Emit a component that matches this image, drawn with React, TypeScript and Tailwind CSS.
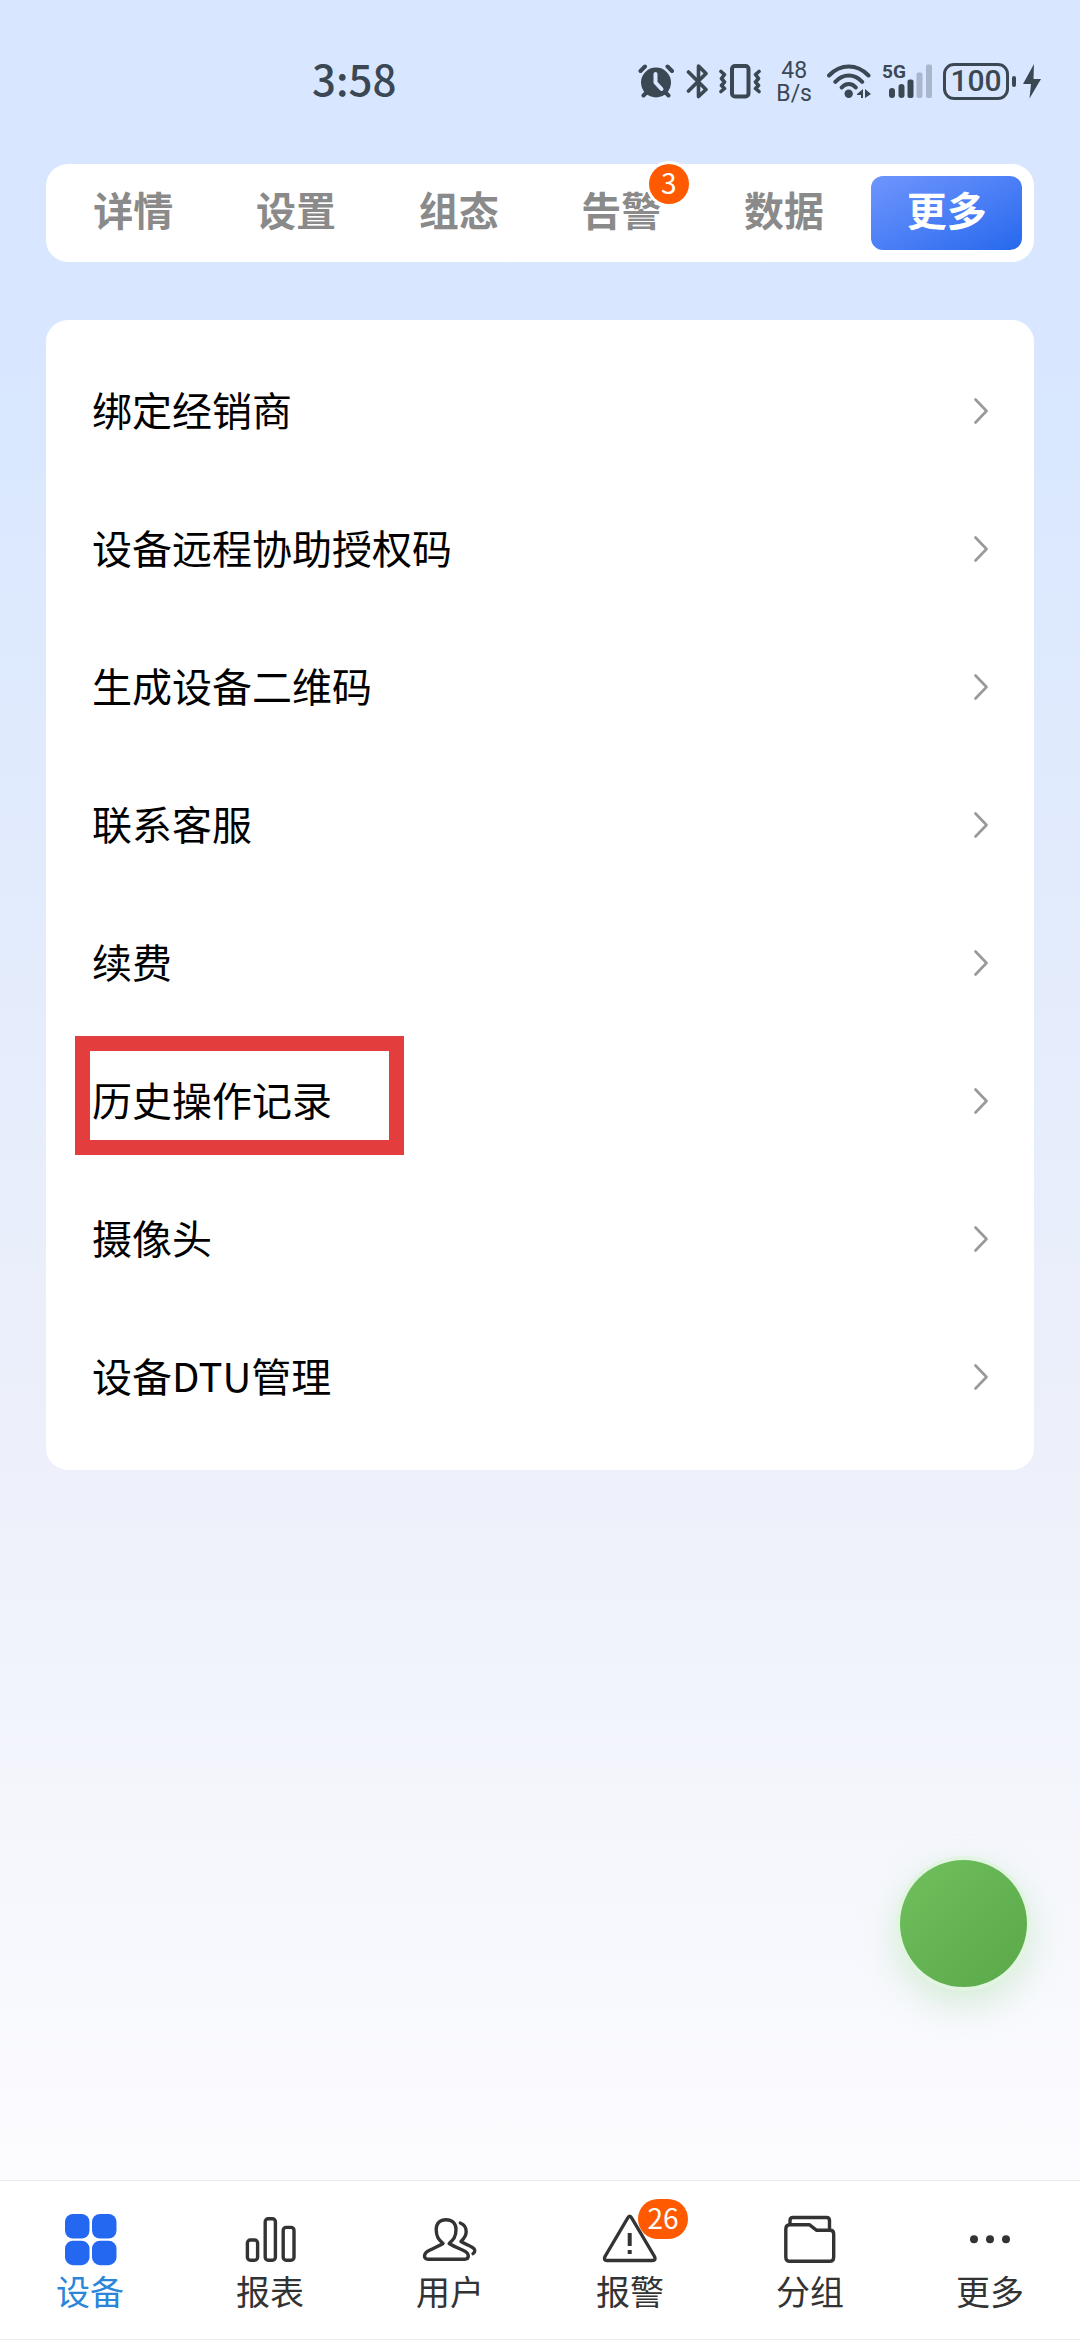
import type { ReactNode } from "react";

const TABS = [
  { label: "详情" },
  { label: "设置" },
  { label: "组态" },
  { label: "告警", badge: 3 },
  { label: "数据" },
  { label: "更多", active: true },
];

const MENU = [
  { label: "绑定经销商" },
  { label: "设备远程协助授权码" },
  { label: "生成设备二维码" },
  { label: "联系客服" },
  { label: "续费" },
  { label: "历史操作记录", highlighted: true },
  { label: "摄像头" },
  { label: "设备DTU管理" },
];

function NavIcon({ children }: { children: ReactNode }) {
  return (
    <svg
      viewBox="0 0 56 56"
      className="size-14"
      fill="none"
      stroke="#333333"
      strokeWidth="3.4"
      strokeLinecap="round"
      strokeLinejoin="round"
      aria-hidden="true"
    >
      {children}
    </svg>
  );
}

const NAV = [
  {
    label: "设备",
    active: true,
    icon: (
      <g fill="#2468f2" stroke="none">
        <rect x="3" y="3" width="24.5" height="24.5" rx="8" />
        <rect x="30" y="3" width="24.5" height="24.5" rx="8" />
        <rect x="3" y="29.7" width="24.5" height="24.5" rx="8" />
        <rect x="30" y="29.7" width="24.5" height="24.5" rx="8" />
      </g>
    ),
  },
  {
    label: "报表",
    icon: (
      <>
        <rect x="5.4" y="29" width="10.2" height="20.3" rx="3" />
        <rect x="23.2" y="7.7" width="10.2" height="41.6" rx="3" />
        <rect x="41.2" y="16.4" width="10.8" height="32.9" rx="3" />
      </>
    ),
  },
  {
    label: "用户",
    icon: (
      <>
        <path d="M21 32.5C16.6 28.6 14.2 25.6 14.2 18.5C14.2 12.3 18 8.7 24 8.7S34 12.3 34 18.5C34 25.6 31.6 28.6 27.2 32.5C32 35.5 36.5 37.2 41 39.2C45 41 46.3 42.5 46.3 45C46.3 47.4 44.8 48.2 42.5 48.2H6C3.6 48.2 2.5 47 2.5 45C2.5 42.5 4 41 7.5 39.2C12 37 17 35 21 32.5Z" />
        <path d="M38.3 12C42.3 13.5 44.3 17 44.2 20.8C44.1 25 42.2 27.5 39 30.5C42.5 32.8 47 34.5 50.5 36.5C53.5 38.3 53.5 41 51 42.6" />
      </>
    ),
  },
  {
    label: "报警",
    badge: 26,
    icon: (
      <>
        <path d="M25.7 7Q27.7 3.5 29.7 7L52.5 45.5Q54.3 49.5 50.5 49.5H5Q1.2 49.5 3 45.5Z" />
        <path d="M27.7 22V35" strokeLinecap="butt" strokeWidth="4" />
        <path d="M27.7 39V43" strokeLinecap="butt" strokeWidth="4" />
      </>
    ),
  },
  {
    label: "分组",
    icon: (
      <>
        <path d="M8 13V9.5Q8 6.5 11 6.5H44.5Q47.5 6.5 47.5 9.5V19" />
        <path d="M8 13.7H27.3L34.7 19.3H48Q51.7 19.3 51.7 23V46Q51.7 50.3 47.5 50.3H8Q3.8 50.3 3.8 46V18Q3.8 13.7 8 13.7Z" />
      </>
    ),
  },
  {
    label: "更多",
    icon: (
      <g fill="#333333" stroke="none">
        <circle cx="12" cy="28.3" r="4" />
        <circle cx="28" cy="28.3" r="4" />
        <circle cx="44" cy="28.3" r="4" />
      </g>
    ),
  },
];

function StatusBar() {
  return (
    <header className="flex h-40 items-center pt-0.5 pr-[39px] pl-[312px] font-['Roboto',sans-serif] text-[#3b4753]">
      <time className="pb-1.5 font-['Noto_Sans_CJK_SC',sans-serif] text-[42px] leading-none font-medium">
        3:58
      </time>

      <div className="ml-auto flex items-center gap-[11px]">
        {/* alarm */}
        <svg width="37" height="35" viewBox="0 0 37 35" fill="none" stroke="currentColor" strokeWidth="4" strokeLinecap="round">
          <circle cx="18" cy="18.5" r="15" fill="currentColor" stroke="none" />
          <path d="M2.5 7L7 2.5M29.5 2.5L34 7M5.5 31.5L9 28M30.5 31.5L27 28" />
          <path d="M17.5 10V18.5L23.5 25" stroke="#d8e7ff" />
        </svg>
        {/* bluetooth */}
        <svg width="22" height="35" viewBox="0 0 22 35" fill="none" stroke="currentColor" strokeWidth="3.6" strokeLinecap="round" strokeLinejoin="round">
          <path d="M2.5 8L20 25.5L12.5 32.5V2L20 9.5L2.5 27" />
        </svg>
        {/* vibrate */}
        <svg width="42" height="35" viewBox="0 0 42 35" fill="none" stroke="currentColor" strokeWidth="4" strokeLinecap="round" strokeLinejoin="round">
          <rect x="13" y="2" width="16.5" height="30.5" rx="3" />
          <path d="M2 7.5L5.5 10.5L2.5 14.5L5.5 18L2.5 21.5L5.5 24.5L2 27.5M40 7.5L36.5 10.5L39.5 14.5L36.5 18L39.5 21.5L36.5 24.5L40 27.5" strokeWidth="3.6" />
        </svg>
        <p className="mx-1 pt-0.5 text-center text-[23px] leading-[23px]">
          48
          <br />
          B/s
        </p>
        {/* wifi */}
        <svg width="44" height="35" viewBox="0 0 44 35" fill="none" stroke="currentColor" strokeWidth="4" strokeLinecap="round">
          <path d="M2 11.5C13.5 -0.5 30 -0.5 41.5 11.5M8.3 17.8C16 9.5 27.5 9.5 35.2 17.8M14.7 23.5C18.5 18.8 25 18.8 28.8 23.5" />
          <circle cx="21.7" cy="29.7" r="4.2" fill="currentColor" stroke="none" />
          <path d="M30 30L36 25V34H34V31H30ZM38 25L44 30L38 34Z" fill="currentColor" stroke="none" />
        </svg>
        {/* signal */}
        <div className="relative">
          <svg width="50" height="35" viewBox="0 0 50 35" fill="currentColor">
            <rect x="7" y="24" width="6" height="10" rx="3" />
            <rect x="16.5" y="20" width="6" height="14" rx="3" />
            <rect x="25.5" y="15.5" width="6" height="18.5" rx="2" />
            <rect x="34.5" y="8.5" width="6" height="25.5" rx="2" opacity="0.3" />
            <rect x="44" y="0.5" width="6" height="33.5" rx="2" opacity="0.3" />
          </svg>
          <span className="absolute top-0 left-0 text-[19px] leading-4 font-bold">5G</span>
        </div>
        <div className="flex items-center gap-[7px]">
          <div className="flex items-center gap-[3px]">
            <span className="flex h-[37px] w-[66px] items-center justify-center rounded-[11px] border-3 border-current text-[30px] leading-none font-medium">
              100
            </span>
            <span className="h-[11px] w-1 rounded-sm bg-current" />
          </div>
          <svg width="18" height="35" viewBox="0 0 18 35" fill="currentColor">
            <path d="M11 0L0 20H8L6.5 34.5L18 15H10.5Z" />
          </svg>
        </div>
      </div>
    </header>
  );
}

export default function App() {
  return (
    <div
      lang="zh-CN"
      className="flex min-h-screen flex-col bg-linear-to-b from-[#d8e7ff] from-15% via-[#edf0fa] via-62% to-[#fcfcff] to-93% font-['Noto_Sans_CJK_SC',sans-serif]"
    >
      <StatusBar />

      <main className="flex-1 px-[46px] pt-1">
        <div className="grid grid-cols-6 gap-3 rounded-[22px] bg-white p-3">
          {TABS.map((tab) => (
            <button
              key={tab.label}
              className={`relative h-[74px] rounded-xl pb-2 text-[40px] leading-none font-bold ${
                tab.active
                  ? "bg-linear-to-br from-[#6f95fd] to-[#2468ee] text-white"
                  : "text-[#8a8a8a]"
              }`}
            >
              {tab.label}
              {tab.badge && (
                <span className="absolute -top-3 right-2 flex size-10 items-center justify-center rounded-full bg-[#ff5a00] pb-1 text-[28px] leading-none font-normal text-white ring-3 ring-white">
                  {tab.badge}
                </span>
              )}
            </button>
          ))}
        </div>

        <ul className="mt-[58px] rounded-[22px] bg-white pt-[22px] pb-6">
          {MENU.map((item) => (
            <li key={item.label} className="relative">
              <a
                href="#"
                className="flex h-[138px] items-center justify-between px-[46px] text-[40px] leading-none text-black"
              >
                <span className="pb-1">{item.label}</span>
                <svg
                  width="14"
                  height="26"
                  viewBox="0 0 14 26"
                  fill="none"
                  stroke="#999999"
                  strokeWidth="2.6"
                  strokeLinecap="round"
                  strokeLinejoin="round"
                >
                  <path d="M1.5 1.5L12.5 13L1.5 24.5" />
                </svg>
              </a>
              {item.highlighted && (
                <span className="pointer-events-none absolute top-1 left-[29px] h-[119px] w-[329px] border-[15px] border-[#e43d3d]" />
              )}
            </li>
          ))}
        </ul>
      </main>

      {/* floating action */}
      <button
        aria-label="悬浮按钮"
        className="fixed right-[53px] bottom-[353px] size-[127px] rounded-full bg-linear-to-br from-[#70c05e] to-[#5aa848] shadow-[0_0_0_4px_#e2f5e2,0_14px_40px_rgba(110,200,100,0.3)]"
      />

      <nav className="sticky bottom-0 grid grid-cols-6 border-y border-[#ebebee] bg-white pt-[30px] pb-7">
        {NAV.map((item) => (
          <a
            key={item.label}
            href="#"
            className={`flex flex-col items-center gap-1 text-[34px] leading-10 ${
              item.active ? "text-[#2b85d8]" : "text-[#333333]"
            }`}
          >
            <span className="relative">
              <NavIcon>{item.icon}</NavIcon>
              {item.badge && (
                <span className="absolute -top-3 left-9 flex h-10 w-[50px] items-center justify-center rounded-full bg-[#ff5a00] pb-1 text-[28px] leading-none text-white">
                  {item.badge}
                </span>
              )}
            </span>
            {item.label}
          </a>
        ))}
      </nav>
    </div>
  );
}
